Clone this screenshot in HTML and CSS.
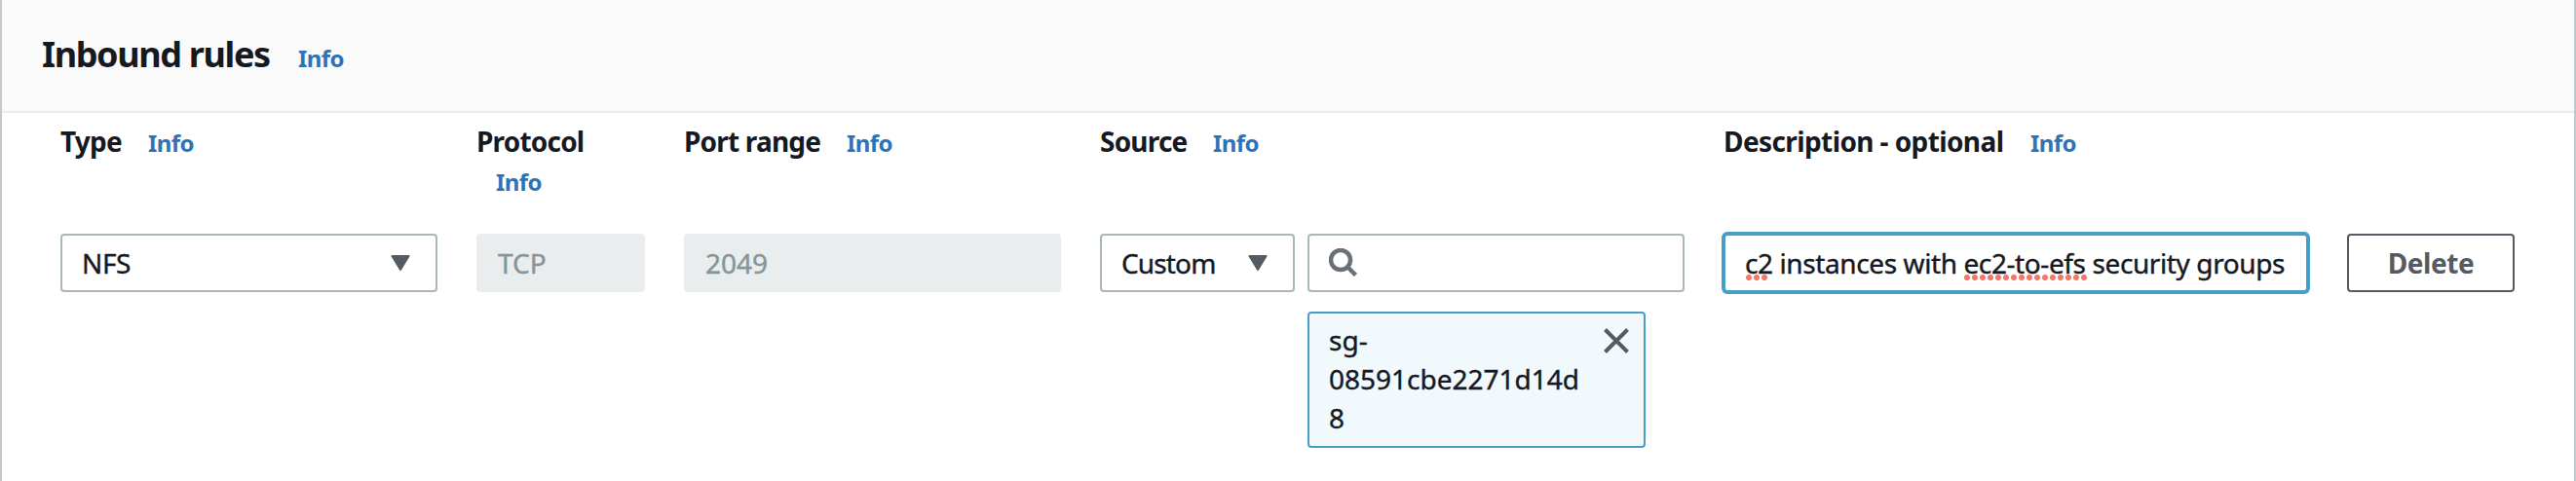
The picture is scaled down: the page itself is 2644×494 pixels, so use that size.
FILE: index.html
```html
<!DOCTYPE html>
<html lang="en">
<head>
<meta charset="utf-8">
<title>Inbound rules</title>
<link rel="stylesheet" href="styles.css">
</head>
<body>
<section class="panel">
  <header class="panel-header">
    <h2 class="title">Inbound rules</h2>
    <a class="info">Info</a>
  </header>
  <div class="rule">
    <div class="field">
      <div class="label"><span class="name type-name">Type</span><a class="info">Info</a></div>
      <div class="box"><span class="value nfs">NFS</span><svg class="caret" viewBox="0 0 20 16"><path d="M1.5 1h17L10 15z"/></svg></div>
    </div>
    <div class="field">
      <div class="label wrapped"><span class="name protocol-name">Protocol</span><a class="info">Info</a></div>
      <div class="box disabled"><span class="value tcp">TCP</span></div>
    </div>
    <div class="field">
      <div class="label"><span class="name port-name">Port range</span><a class="info">Info</a></div>
      <div class="box disabled"><span class="value port">2049</span></div>
    </div>
    <div class="field">
      <div class="label"><span class="name source-name">Source</span><a class="info">Info</a></div>
      <div class="source">
        <div class="box source-kind"><span class="value custom">Custom</span><svg class="caret" viewBox="0 0 20 16"><path d="M1.5 1h17L10 15z"/></svg></div>
        <div class="source-search">
          <div class="box"><svg class="search" viewBox="0 0 30 30"><circle cx="12" cy="12" r="10"/><path d="M19 19l8.5 8.5"/></svg></div>
          <div class="token">
            <div class="token-text"><span>sg-</span><span class="token-id">08591cbe2271d14d</span><span>8</span></div>
            <svg class="close" viewBox="0 0 26 26"><path d="M1.5 1.5l23 23M24.5 1.5l-23 23"/></svg>
          </div>
        </div>
      </div>
    </div>
    <div class="field">
      <div class="label"><span class="name description-name">Description - optional</span><a class="info">Info</a></div>
      <div class="box focused"><span class="value description"><span class="misspelt short">c2</span> instances with <span class="misspelt long">ec2-to-efs</span> security groups</span></div>
    </div>
    <div class="field action">
      <button class="delete" type="button"><span class="delete-text">Delete</span></button>
    </div>
  </div>
</section>
</body>
</html>
```
FILE: styles.css
```css
* { box-sizing: border-box; }
body {
  margin: 0;
  background: #fff;
  color: #16191f;
  font: 28px/40px "Noto Sans", sans-serif;
}
.panel {
  height: 494px;
  border: solid #c2c9cc;
  border-width: 0 2px;
  overflow: hidden;
}
.panel-header {
  display: flex;
  align-items: baseline;
  height: 116px;
  padding: 32px 0 0 41px;
  background: #fafafa;
  border-bottom: 2px solid #eaeded;
}
.title {
  width: 263px;
  margin: 0;
  font-size: 36px;
  line-height: 48px;
  font-weight: 700;
  letter-spacing: -1.35px;
  white-space: nowrap;
}
.info {
  color: #2e73b8;
  font-size: 24px;
  font-weight: 700;
  letter-spacing: -0.6px;
}
.rule {
  display: grid;
  grid-template-columns: 387px 173px 387px 600px 600px 172px;
  gap: 40px;
  padding: 9px 0 0 60px;
}
.label {
  display: flex;
  align-items: baseline;
  height: 115px;
  white-space: nowrap;
}
.label.wrapped { display: block; }
.wrapped .name { display: block; }
.wrapped .info { margin-left: 20px; }
.name { font-weight: 700; letter-spacing: -0.8px; }
.type-name { width: 90px; }
.port-name { width: 167px; }
.source-name { width: 116px; }
.description-name { width: 315px; letter-spacing: -0.6px; }
.box {
  display: flex;
  align-items: center;
  justify-content: space-between;
  height: 60px;
  padding: 0 26px 0 20px;
  border: 2px solid #aab7b8;
  border-radius: 4px;
  background: #fff;
  white-space: nowrap;
}
.value, .token-text { -webkit-text-stroke: 0.4px currentColor; }
.nfs { letter-spacing: -0.4px; }
.custom { letter-spacing: -0.85px; }
.description { letter-spacing: -0.4px; }
.disabled { background: #eaeded; border-color: #eaeded; color: #879596; }
.focused { border-color: #479fc8; box-shadow: 0 0 0 2px #479fc8; }
.caret { width: 20px; height: 16px; fill: #545b64; stroke: #545b64; stroke-width: 2; stroke-linejoin: round; }
.source { display: flex; gap: 13px; align-items: flex-start; }
.source-kind { width: 200px; }
.source-search { width: 387px; }
.search { width: 30px; height: 30px; fill: none; stroke: #687078; stroke-width: 4.5; }
.token {
  display: flex;
  justify-content: space-between;
  width: 347px;
  height: 140px;
  margin-top: 20px;
  padding: 7px 15px 0 20px;
  background: #f2f9fd;
  border: 2px solid #479fc8;
  border-radius: 4px;
}
.token-text { display: flex; flex-direction: column; }
.close { width: 26px; height: 26px; margin-top: 8px; stroke: #545b64; stroke-width: 4; }
.misspelt { position: relative; }
.misspelt::after {
  content: "";
  position: absolute;
  left: 0;
  top: 30px;
  height: 8px;
  background: radial-gradient(circle at 4px 4px, #f2776c 2.7px, transparent 3.3px) 0 0 / 8px 8px;
}
.short::after { width: 24px; }
.long::after { width: 128px; }
.action { padding-top: 115px; }
.delete {
  width: 172px;
  height: 60px;
  padding: 0;
  background: #fff;
  border: 2px solid #545b64;
  border-radius: 4px;
  color: #545b64;
  font: inherit;
  font-weight: 700;
  letter-spacing: -0.4px;
}
```
